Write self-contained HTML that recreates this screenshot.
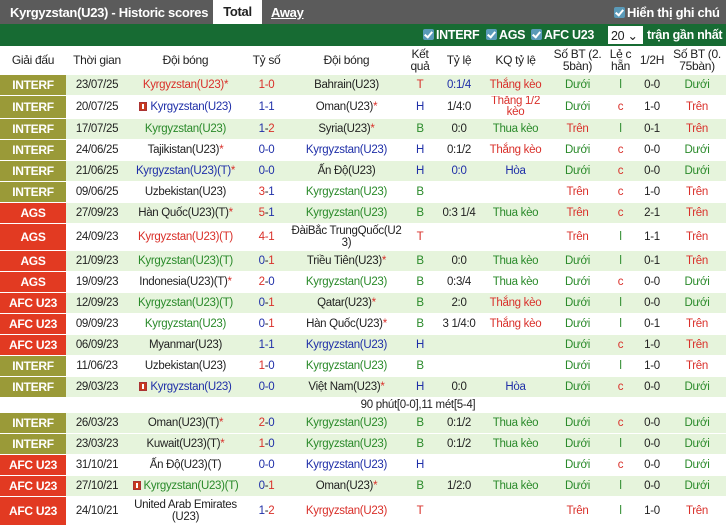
<!DOCTYPE html>
<html><head><meta charset="utf-8"><style>
*{margin:0;padding:0;box-sizing:border-box}
body{width:726px;height:528px;overflow:hidden;background:#fff;font-family:"Liberation Sans",sans-serif;font-size:11.5px;color:#222;letter-spacing:-0.3px}
.top{height:24px;background:#5b5b5b;position:relative;color:#fff;font-weight:bold;font-size:13px;white-space:nowrap}
.top .t{position:absolute;left:10px;top:5px}
.top .tot{position:absolute;left:213px;top:0;width:49px;height:24px;background:#fff;color:#222;text-align:center;line-height:24px}
.top .aw{position:absolute;left:271px;top:5px;text-decoration:underline}
.top .hi{position:absolute;left:614px;top:5px}
.cb{display:inline-block;width:11px;height:11px;background:#5a9ab8;border-radius:2px;vertical-align:-1px;margin-right:2px;position:relative}
.cb:after{content:"";position:absolute;left:3px;top:1px;width:3px;height:6px;border:solid #fff;border-width:0 2px 2px 0;transform:rotate(40deg)}
.gr{height:22px;background:#176b33;color:#fff;font-weight:bold;font-size:12.5px;position:relative;white-space:nowrap}
.gr span{position:absolute;top:4px}
.sel{position:absolute;left:608px;top:2px!important;width:35px;height:18px;background:#fff;color:#222;font-weight:normal;padding:2px 3px}
table{border-collapse:collapse;table-layout:fixed;width:726px}
td{text-align:center;padding:0;line-height:12px;border-bottom:1px solid #fff;overflow:hidden;white-space:nowrap}
thead td{height:28px;background:#fff;color:#222;font-size:12px}
.lg{color:#fff;font-weight:bold;font-size:12px}
.i{background:#9a9a38}.a{background:#e23a22}
tr.g td{background:#e6f4dc}
tr.g td.i{background:#9a9a38}tr.g td.a{background:#e23a22}
.r{color:#d9302a}.b{color:#1f2fa8}.n{color:#2a8a2a}
.ic{display:inline-block;width:8px;height:9px;background:#c93a1e;border:1px solid #a33;vertical-align:-1px;margin-right:3px;position:relative}
.ic:after{content:"";position:absolute;left:2px;top:1px;width:2px;height:5px;background:#fff}
.note td{height:15px;background:#fff}
</style></head><body>
<div class="top"><span class="t">Kyrgyzstan(U23) - Historic scores</span><span class="tot">Total</span><span class="aw">Away</span><span class="hi"><i class="cb"></i>Hiển thị ghi chú</span></div>
<div class="gr"><span style="left:423px"><i class="cb"></i>INTERF</span><span style="left:486px"><i class="cb"></i>AGS</span><span style="left:531px"><i class="cb"></i>AFC U23</span><span class="sel">20 ⌄</span><span style="left:647px">trận gần nhất</span></div>
<table>
<colgroup><col style="width:66px"><col style="width:62px"><col style="width:115px"><col style="width:47px"><col style="width:113px"><col style="width:34px"><col style="width:44px"><col style="width:69px"><col style="width:55px"><col style="width:31px"><col style="width:32px"><col style="width:58px"></colgroup>
<thead><tr><td>Giải đấu</td><td>Thời gian</td><td>Đội bóng</td><td>Tỷ số</td><td>Đội bóng</td><td>Kết<br>quả</td><td>Tỷ lệ</td><td>KQ tỷ lệ</td><td>Số BT (2.<br>5bàn)</td><td>Lẻ c<br>hẵn</td><td>1/2H</td><td>Số BT (0.<br>75bàn)</td></tr></thead>
<tbody>
<tr class="g" style="height:21px"><td class="lg i">INTERF</td><td>23/07/25</td><td class="r">Kyrgyzstan(U23)*</td><td class="r">1-0</td><td>Bahrain(U23)</td><td class="r">T</td><td class="b">0:1/4</td><td class="r">Thắng kèo</td><td class="n">Dưới</td><td class="n">l</td><td>0-0</td><td class="n">Dưới</td></tr>
<tr style="height:23px"><td class="lg i">INTERF</td><td>20/07/25</td><td class="b"><i class="ic"></i>Kyrgyzstan(U23)</td><td class="b">1-1</td><td>Oman(U23)<span class="r">*</span></td><td class="b">H</td><td>1/4:0</td><td class="r" style="line-height:11px">Thắng 1/2<br>kèo</td><td class="n">Dưới</td><td class="r">c</td><td>1-0</td><td class="r">Trên</td></tr>
<tr class="g" style="height:21px"><td class="lg i">INTERF</td><td>17/07/25</td><td class="n">Kyrgyzstan(U23)</td><td><span class="b">1</span>-<span class="r">2</span></td><td>Syria(U23)<span class="r">*</span></td><td class="n">B</td><td>0:0</td><td class="n">Thua kèo</td><td class="r">Trên</td><td class="n">l</td><td>0-1</td><td class="r">Trên</td></tr>
<tr style="height:21px"><td class="lg i">INTERF</td><td>24/06/25</td><td>Tajikistan(U23)<span class="r">*</span></td><td class="b">0-0</td><td class="b">Kyrgyzstan(U23)</td><td class="b">H</td><td>0:1/2</td><td class="r">Thắng kèo</td><td class="n">Dưới</td><td class="r">c</td><td>0-0</td><td class="n">Dưới</td></tr>
<tr class="g" style="height:21px"><td class="lg i">INTERF</td><td>21/06/25</td><td class="b">Kyrgyzstan(U23)(T)<span class="r">*</span></td><td class="b">0-0</td><td>Ấn Độ(U23)</td><td class="b">H</td><td class="b">0:0</td><td class="b">Hòa</td><td class="n">Dưới</td><td class="r">c</td><td>0-0</td><td class="n">Dưới</td></tr>
<tr style="height:21px"><td class="lg i">INTERF</td><td>09/06/25</td><td>Uzbekistan(U23)</td><td><span class="r">3</span>-<span class="b">1</span></td><td class="n">Kyrgyzstan(U23)</td><td class="n">B</td><td></td><td></td><td class="r">Trên</td><td class="r">c</td><td>1-0</td><td class="r">Trên</td></tr>
<tr class="g" style="height:21px"><td class="lg a">AGS</td><td>27/09/23</td><td>Hàn Quốc(U23)(T)<span class="r">*</span></td><td><span class="r">5</span>-<span class="b">1</span></td><td class="n">Kyrgyzstan(U23)</td><td class="n">B</td><td>0:3 1/4</td><td class="n">Thua kèo</td><td class="r">Trên</td><td class="r">c</td><td>2-1</td><td class="r">Trên</td></tr>
<tr style="height:27px"><td class="lg a">AGS</td><td>24/09/23</td><td class="r">Kyrgyzstan(U23)(T)</td><td class="r">4-1</td><td>ĐàiBắc TrungQuốc(U2<br>3)</td><td class="r">T</td><td></td><td></td><td class="r">Trên</td><td class="n">l</td><td>1-1</td><td class="r">Trên</td></tr>
<tr class="g" style="height:21px"><td class="lg a">AGS</td><td>21/09/23</td><td class="n">Kyrgyzstan(U23)(T)</td><td><span class="b">0</span>-<span class="r">1</span></td><td>Triều Tiên(U23)<span class="r">*</span></td><td class="n">B</td><td>0:0</td><td class="n">Thua kèo</td><td class="n">Dưới</td><td class="n">l</td><td>0-1</td><td class="r">Trên</td></tr>
<tr style="height:21px"><td class="lg a">AGS</td><td>19/09/23</td><td>Indonesia(U23)(T)<span class="r">*</span></td><td><span class="r">2</span>-<span class="b">0</span></td><td class="n">Kyrgyzstan(U23)</td><td class="n">B</td><td>0:3/4</td><td class="n">Thua kèo</td><td class="n">Dưới</td><td class="r">c</td><td>0-0</td><td class="n">Dưới</td></tr>
<tr class="g" style="height:21px"><td class="lg a">AFC U23</td><td>12/09/23</td><td class="n">Kyrgyzstan(U23)(T)</td><td><span class="b">0</span>-<span class="r">1</span></td><td>Qatar(U23)<span class="r">*</span></td><td class="n">B</td><td>2:0</td><td class="r">Thắng kèo</td><td class="n">Dưới</td><td class="n">l</td><td>0-0</td><td class="n">Dưới</td></tr>
<tr style="height:21px"><td class="lg a">AFC U23</td><td>09/09/23</td><td class="n">Kyrgyzstan(U23)</td><td><span class="b">0</span>-<span class="r">1</span></td><td>Hàn Quốc(U23)<span class="r">*</span></td><td class="n">B</td><td>3 1/4:0</td><td class="r">Thắng kèo</td><td class="n">Dưới</td><td class="n">l</td><td>0-1</td><td class="r">Trên</td></tr>
<tr class="g" style="height:21px"><td class="lg a">AFC U23</td><td>06/09/23</td><td>Myanmar(U23)</td><td class="b">1-1</td><td class="b">Kyrgyzstan(U23)</td><td class="b">H</td><td></td><td></td><td class="n">Dưới</td><td class="r">c</td><td>1-0</td><td class="r">Trên</td></tr>
<tr style="height:21px"><td class="lg i">INTERF</td><td>11/06/23</td><td>Uzbekistan(U23)</td><td><span class="r">1</span>-<span class="b">0</span></td><td class="n">Kyrgyzstan(U23)</td><td class="n">B</td><td></td><td></td><td class="n">Dưới</td><td class="n">l</td><td>1-0</td><td class="r">Trên</td></tr>
<tr class="g" style="height:21px"><td class="lg i">INTERF</td><td>29/03/23</td><td class="b"><i class="ic"></i>Kyrgyzstan(U23)</td><td class="b">0-0</td><td>Việt Nam(U23)<span class="r">*</span></td><td class="b">H</td><td>0:0</td><td class="b">Hòa</td><td class="n">Dưới</td><td class="r">c</td><td>0-0</td><td class="n">Dưới</td></tr>
<tr class="note"><td colspan="12" style="padding-left:110px">90 phút[0-0],11 mét[5-4]</td></tr>
<tr class="g" style="height:21px"><td class="lg i">INTERF</td><td>26/03/23</td><td>Oman(U23)(T)<span class="r">*</span></td><td><span class="r">2</span>-<span class="b">0</span></td><td class="n">Kyrgyzstan(U23)</td><td class="n">B</td><td>0:1/2</td><td class="n">Thua kèo</td><td class="n">Dưới</td><td class="r">c</td><td>0-0</td><td class="n">Dưới</td></tr>
<tr class="g" style="height:21px"><td class="lg i">INTERF</td><td>23/03/23</td><td>Kuwait(U23)(T)<span class="r">*</span></td><td><span class="r">1</span>-<span class="b">0</span></td><td class="n">Kyrgyzstan(U23)</td><td class="n">B</td><td>0:1/2</td><td class="n">Thua kèo</td><td class="n">Dưới</td><td class="n">l</td><td>0-0</td><td class="n">Dưới</td></tr>
<tr style="height:21px"><td class="lg a">AFC U23</td><td>31/10/21</td><td>Ấn Độ(U23)(T)</td><td class="b">0-0</td><td class="b">Kyrgyzstan(U23)</td><td class="b">H</td><td></td><td></td><td class="n">Dưới</td><td class="r">c</td><td>0-0</td><td class="n">Dưới</td></tr>
<tr class="g" style="height:21px"><td class="lg a">AFC U23</td><td>27/10/21</td><td class="n"><i class="ic"></i>Kyrgyzstan(U23)(T)</td><td><span class="b">0</span>-<span class="r">1</span></td><td>Oman(U23)<span class="r">*</span></td><td class="n">B</td><td>1/2:0</td><td class="n">Thua kèo</td><td class="n">Dưới</td><td class="n">l</td><td>0-0</td><td class="n">Dưới</td></tr>
<tr style="height:29px"><td class="lg a">AFC U23</td><td>24/10/21</td><td>United Arab Emirates<br>(U23)</td><td><span class="b">1</span>-<span class="r">2</span></td><td class="r">Kyrgyzstan(U23)</td><td class="r">T</td><td></td><td></td><td class="r">Trên</td><td class="n">l</td><td>1-0</td><td class="r">Trên</td></tr>
</tbody></table>
</body></html>
